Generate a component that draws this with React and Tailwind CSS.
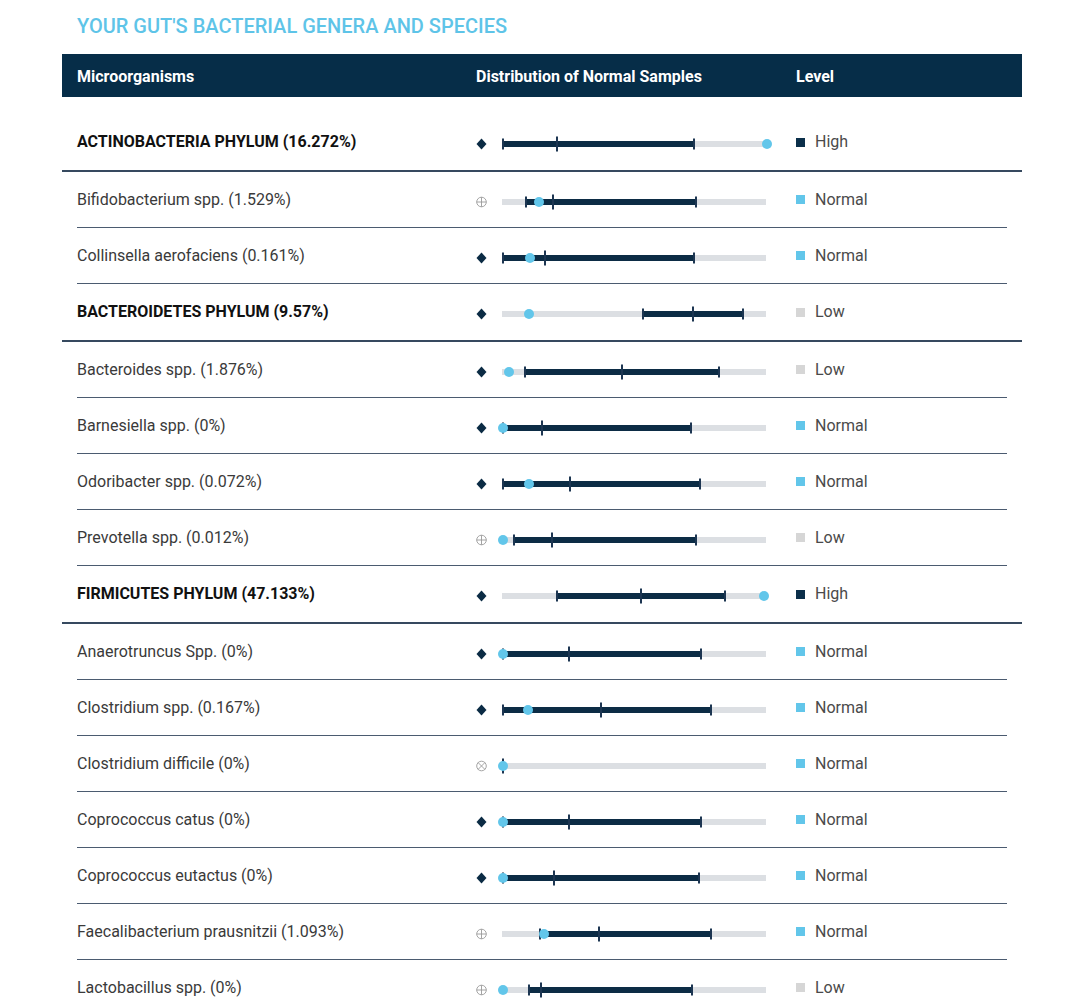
import React from 'react';

const rows = [
  { name: 'ACTINOBACTERIA PHYLUM (16.272%)', phylum: true, icon: 'diamond', lo: 1, med: 55, hi: 192, dot: 265, level: 'High' },
  { name: 'Bifidobacterium spp. (1.529%)', icon: 'plus', lo: 24, med: 51, hi: 194, dot: 37, level: 'Normal' },
  { name: 'Collinsella aerofaciens (0.161%)', icon: 'diamond', lo: 1, med: 43, hi: 192, dot: 28, level: 'Normal' },
  { name: 'BACTEROIDETES PHYLUM (9.57%)', phylum: true, icon: 'diamond', lo: 141, med: 191, hi: 241, dot: 27, level: 'Low' },
  { name: 'Bacteroides spp. (1.876%)', icon: 'diamond', lo: 23, med: 120, hi: 217, dot: 7, level: 'Low' },
  { name: 'Barnesiella spp. (0%)', icon: 'diamond', lo: 1, med: 40, hi: 189, dot: 1, level: 'Normal' },
  { name: 'Odoribacter spp. (0.072%)', icon: 'diamond', lo: 1, med: 68, hi: 198, dot: 27, level: 'Normal' },
  { name: 'Prevotella spp. (0.012%)', icon: 'plus', lo: 12, med: 50, hi: 194, dot: 1, level: 'Low' },
  { name: 'FIRMICUTES PHYLUM (47.133%)', phylum: true, icon: 'diamond', lo: 55, med: 139, hi: 223, dot: 262, level: 'High' },
  { name: 'Anaerotruncus Spp. (0%)', icon: 'diamond', lo: 1, med: 67, hi: 199, dot: 1, level: 'Normal' },
  { name: 'Clostridium spp. (0.167%)', icon: 'diamond', lo: 1, med: 99, hi: 209, dot: 26, level: 'Normal' },
  { name: 'Clostridium difficile (0%)', icon: 'cross', lo: 1, med: 1, hi: 1, dot: 1, level: 'Normal' },
  { name: 'Coprococcus catus (0%)', icon: 'diamond', lo: 1, med: 67, hi: 199, dot: 1, level: 'Normal' },
  { name: 'Coprococcus eutactus (0%)', icon: 'diamond', lo: 1, med: 52, hi: 197, dot: 1, level: 'Normal' },
  { name: 'Faecalibacterium prausnitzii (1.093%)', icon: 'plus', lo: 38, med: 97, hi: 209, dot: 42, level: 'Normal' },
  { name: 'Lactobacillus spp. (0%)', icon: 'plus', lo: 27, med: 39, hi: 190, dot: 1, level: 'Low' },
];

const levelColor = {
  High: 'bg-[#0b2f4a]',
  Normal: 'bg-[#62c6ea]',
  Low: 'bg-[#d6d6d6]',
};

const Marker = ({ type }) => {
  if (type === 'diamond') {
    return (
      <svg width="11" height="12" viewBox="0 0 11 12">
        <polygon points="5.5,0.5 10.5,6 5.5,11.5 0.5,6" fill="#0b2b44" />
      </svg>
    );
  }
  return (
    <svg width="11" height="12" viewBox="0 0 11 12">
      <circle cx="5.5" cy="6" r="4.8" fill="none" stroke="#9a9a9a" strokeWidth="0.9" />
      {type === 'plus' ? (
        <path d="M5.5 1.2V10.8M0.7 6H10.3" stroke="#9a9a9a" strokeWidth="0.9" />
      ) : (
        <path d="M2.1 2.6L8.9 9.4M8.9 2.6L2.1 9.4" stroke="#9a9a9a" strokeWidth="0.9" />
      )}
    </svg>
  );
};

const RangeBar = ({ lo, med, hi, dot }) => (
  <svg width="272" height="20" viewBox="0 0 272 20" className="overflow-visible">
    <rect x="0" y="7" width="264" height="6" fill="#dcdfe3" />
    <rect x={lo} y="7" width={hi - lo} height="6" fill="#0c2c45" />
    <rect x={lo - 1} y="4.5" width="2" height="11" fill="#1d3652" />
    <rect x={hi - 1} y="4.5" width="2" height="11" fill="#1d3652" />
    <rect x={med - 1} y="2.5" width="2" height="15" fill="#1d3652" />
    <circle cx={dot} cy="10" r="5" fill="#62c6ea" />
  </svg>
);

const Row = ({ row }) => (
  <div
    className={
      row.phylum
        ? 'flex items-center h-[58px] border-b-2 border-[#36495f] px-[15px]'
        : 'mx-[15px] flex items-center h-[56px] border-b border-[#4b5b70]'
    }
  >
    <div
      className={
        row.phylum
          ? 'w-[399px] text-[16px] font-bold text-[#111]'
          : 'w-[399px] text-[16px] text-[#3a3a3a]'
      }
    >
      {row.name}
    </div>
    <div className="w-[320px] flex items-center mt-1">
      <div className="w-[11px] h-[12px] flex">
        <Marker type={row.icon} />
      </div>
      <div className="ml-[15px] flex">
        <RangeBar lo={row.lo} med={row.med} hi={row.hi} dot={row.dot} />
      </div>
    </div>
    <div className="flex items-center gap-[10px] text-[16px] text-[#4a4a4a]">
      <span className={`w-[9px] h-[9px] ${levelColor[row.level]}`} />
      <span>{row.level}</span>
    </div>
  </div>
);

export default function App() {
  return (
    <div className="bg-white min-h-screen font-['Roboto',sans-serif]">
      <div className="w-[960px] ml-[62px] pt-[13px]">
        <h2 className="pl-[15px] text-[20px] leading-[26px] font-medium text-[#5ec4e8] uppercase">
          Your Gut's Bacterial Genera and Species
        </h2>
        <div className="mt-[15px] h-[43px] bg-[#062d48] flex items-center px-[15px] text-[16px] font-bold text-white">
          <div className="w-[399px] pt-[2px]">Microorganisms</div>
          <div className="w-[320px] pt-[2px]">Distribution of Normal Samples</div>
          <div className="pt-[2px]">Level</div>
        </div>
        <div className="pt-[17px]">
          {rows.map((row) => (
            <Row key={row.name} row={row} />
          ))}
        </div>
      </div>
    </div>
  );
}
